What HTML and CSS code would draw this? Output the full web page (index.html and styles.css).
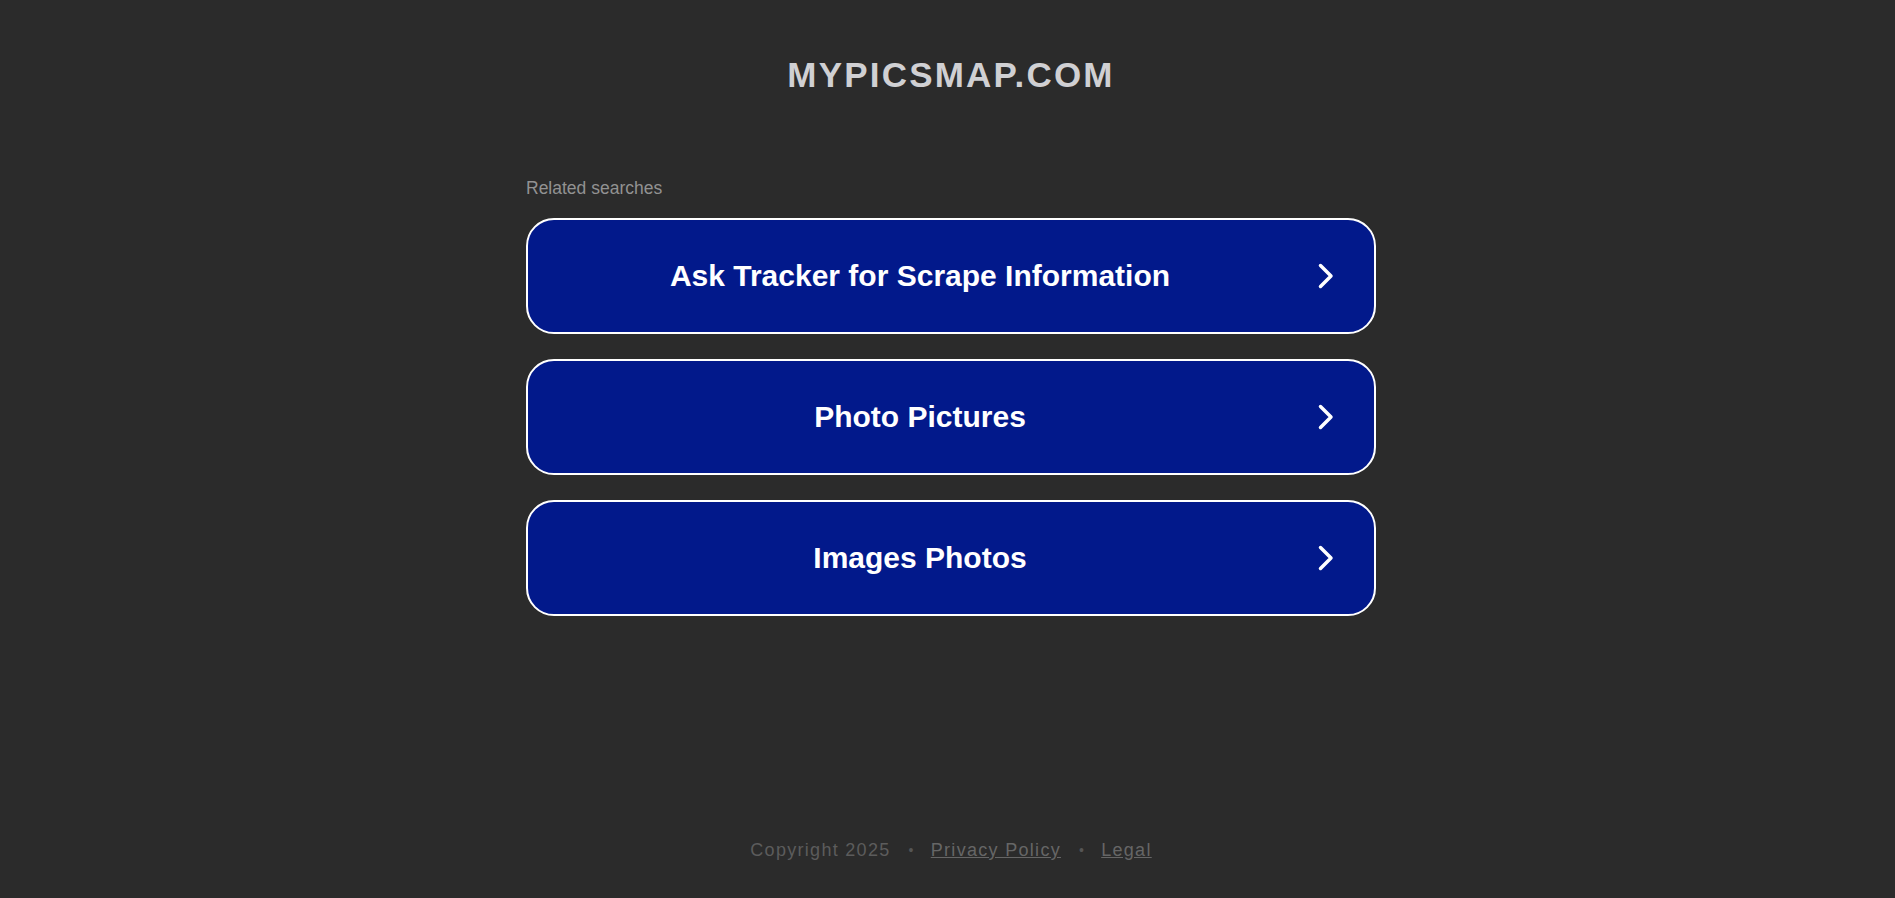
FILE: index.html
```html
<!DOCTYPE html>
<html lang="en">
<head>
<meta charset="utf-8">
<title>mypicsmap.com</title>
<link rel="stylesheet" href="styles.css">
</head>
<body>
<div class="page">
  <header class="site-title">MYPICSMAP.COM</header>
  <main class="content">
    <div class="related-label">Related searches</div>
    <ul class="links">
      <li>
        <a class="link-btn" href="#">
          <span class="link-text">Ask Tracker for Scrape Information</span>
          <svg class="chev" width="16" height="26" viewBox="0 0 16 26"><polyline points="2.5,2.5 13,13 2.5,23.5" fill="none" stroke="#fff" stroke-width="3.5" stroke-linecap="round" stroke-linejoin="round"/></svg>
        </a>
      </li>
      <li>
        <a class="link-btn" href="#">
          <span class="link-text">Photo Pictures</span>
          <svg class="chev" width="16" height="26" viewBox="0 0 16 26"><polyline points="2.5,2.5 13,13 2.5,23.5" fill="none" stroke="#fff" stroke-width="3.5" stroke-linecap="round" stroke-linejoin="round"/></svg>
        </a>
      </li>
      <li>
        <a class="link-btn" href="#">
          <span class="link-text">Images Photos</span>
          <svg class="chev" width="16" height="26" viewBox="0 0 16 26"><polyline points="2.5,2.5 13,13 2.5,23.5" fill="none" stroke="#fff" stroke-width="3.5" stroke-linecap="round" stroke-linejoin="round"/></svg>
        </a>
      </li>
    </ul>
  </main>
  <footer class="footer">
    <span class="copy">Copyright 2025</span>
    <span class="sep">•</span>
    <a class="foot-link" href="#">Privacy Policy</a>
    <span class="sep">•</span>
    <a class="foot-link" href="#">Legal</a>
  </footer>
</div>
</body>
</html>
```

FILE: styles.css
```css
html, body {
  margin: 0;
  padding: 0;
  background: #2b2b2b;
}

body {
  font-family: "Liberation Sans", Arial, sans-serif;
}

.page {
  min-height: 100vh;
  box-sizing: border-box;
  display: flex;
  flex-direction: column;
  align-items: center;
  padding: 55px 0 37px 7px;
}

.site-title {
  margin: 0;
  font-size: 35px;
  line-height: 40px;
  font-weight: bold;
  letter-spacing: 2.2px;
  color: #d0d0d3;
}

.content {
  width: 850px;
  margin-top: 83px;
}

.related-label {
  font-size: 17.5px;
  line-height: 20px;
  color: #929292;
  margin-bottom: 20px;
}

.links {
  list-style: none;
  margin: 0;
  padding: 0;
  display: flex;
  flex-direction: column;
  gap: 25px;
}

.link-btn {
  box-sizing: border-box;
  height: 116px;
  display: flex;
  align-items: center;
  background: #02198b;
  border: 2px solid #ffffff;
  border-radius: 28px;
  text-decoration: none;
  color: #ffffff;
}

.link-text {
  flex: 1;
  text-align: center;
  font-size: 30px;
  font-weight: bold;
  line-height: 36px;
}

.chev {
  display: block;
  margin: 0 40px 0 6px;
}

.footer {
  margin-top: auto;
  display: flex;
  align-items: center;
  font-size: 18px;
  line-height: 22px;
  letter-spacing: 1.3px;
  color: #5c5c5c;
}

.sep {
  margin: 0 16px 0 18px;
  font-size: 14px;
  color: #555555;
}

.foot-link {
  color: #666666;
  text-decoration: underline;
}
```
